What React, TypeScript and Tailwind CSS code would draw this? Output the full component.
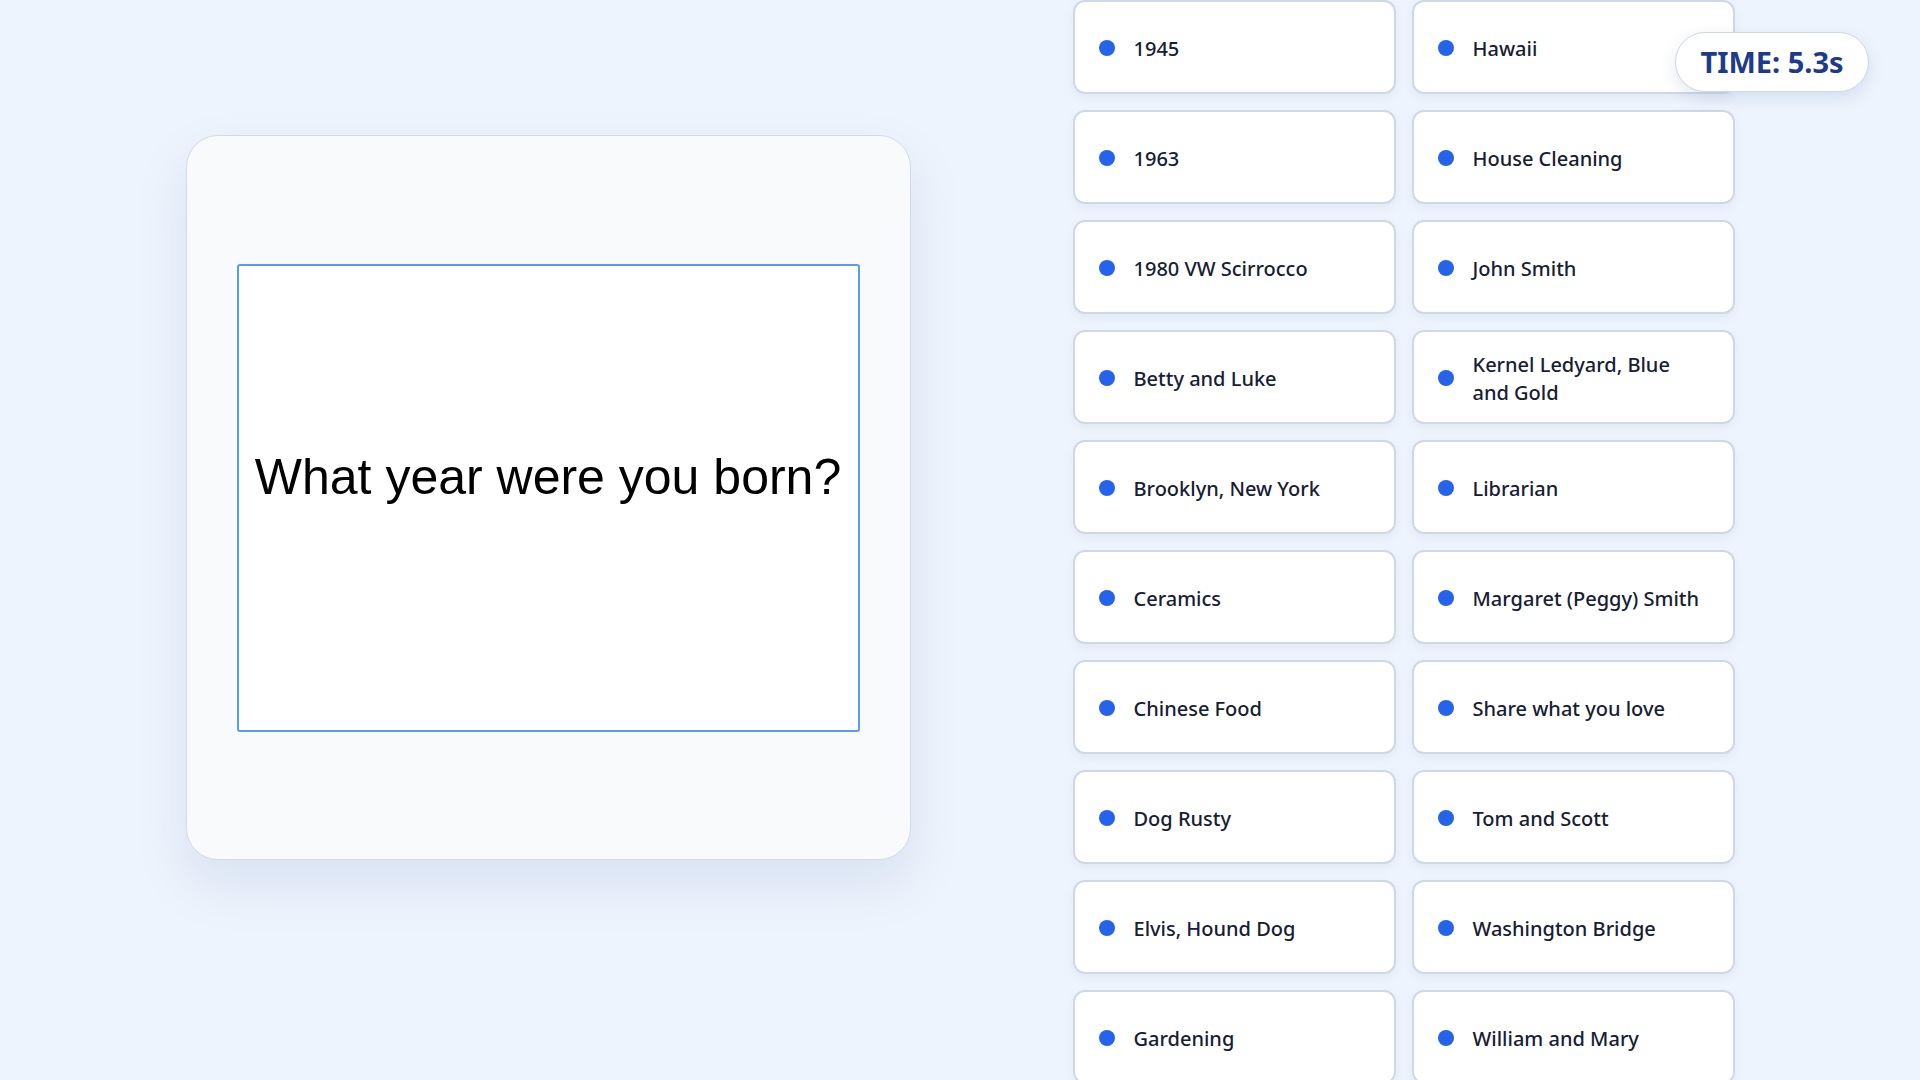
// Quiz screen: question card on the left, answer grid on the right, timer badge pinned top-right.

const answers = [
  "1945",
  "1963",
  "1980 VW Scirrocco",
  "Betty and Luke",
  "Brooklyn, New York",
  "Ceramics",
  "Chinese Food",
  "Dog Rusty",
  "Elvis, Hound Dog",
  "Gardening",
  "Hawaii",
  "House Cleaning",
  "John Smith",
  "Kernel Ledyard, Blue and Gold",
  "Librarian",
  "Margaret (Peggy) Smith",
  "Share what you love",
  "Tom and Scott",
  "Washington Bridge",
  "William and Mary",
];

function AnswerCard({ label }: { label: string }) {
  return (
    <button
      type="button"
      className="flex h-[94px] items-center gap-[19px] rounded-xl border-2 border-[#cfd8e5] bg-white px-6 text-left shadow-[0_4px_10px_rgba(148,163,184,0.12)]"
    >
      <span className="mt-[2px] h-4 w-4 shrink-0 rounded-full bg-[#2563eb]" />
      <span className="max-w-[230px] pt-[4px] text-[20px] leading-7 font-medium text-[#172033]">
        {label}
      </span>
    </button>
  );
}

export default function App() {
  return (
    <div
      className="relative h-screen w-full overflow-hidden bg-[#eef4fd]"
      style={{ fontFamily: '"Noto Sans", "Open Sans", sans-serif' }}
    >
      <div className="flex items-start justify-center gap-[162px]">
        {/* question card */}
        <div className="mt-[135px] flex h-[725px] w-[725px] items-center justify-center rounded-[32px] border border-[#d3dbe6] bg-[#f8fafc] px-[50px] shadow-[0_24px_50px_rgba(100,130,180,0.16)]">
          <div className="flex h-[468px] w-full items-center justify-center rounded-[3px] border-2 border-[#5a9af7] bg-white pb-[42px]">
            <p
              className="text-[50px] leading-none text-black"
              style={{ fontFamily: '"Liberation Sans", Arial, sans-serif' }}
            >
              What year were you born?
            </p>
          </div>
        </div>

        {/* answers */}
        <div className="grid w-[662px] grid-flow-col grid-cols-2 grid-rows-10 gap-4">
          {answers.map((a) => (
            <AnswerCard key={a} label={a} />
          ))}
        </div>
      </div>

      {/* timer */}
      <div className="absolute top-[32px] right-[51px] flex h-[60px] w-[194px] items-center justify-center rounded-full border border-[#cfd8e5] bg-white shadow-[0_6px_16px_rgba(100,130,180,0.18)]">
        <span className="text-[29px] font-bold text-[#1e3a8a]">TIME: 5.3s</span>
      </div>
    </div>
  );
}
